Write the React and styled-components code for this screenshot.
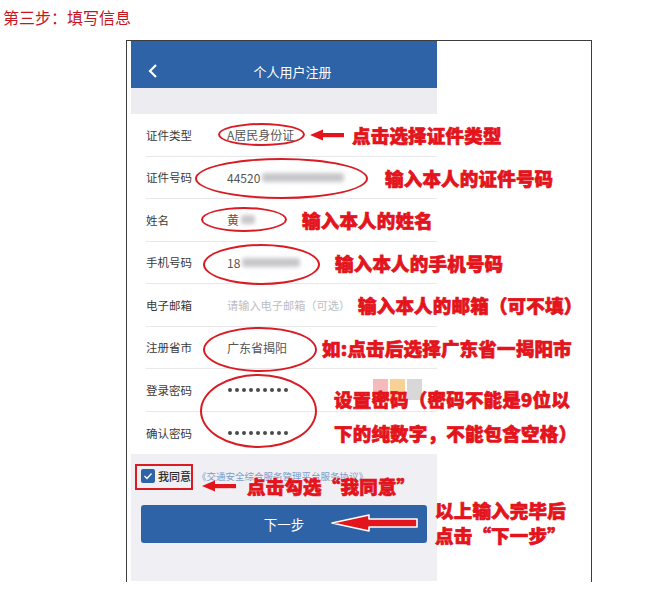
import React from 'react'
import styled, { createGlobalStyle } from 'styled-components'

const Global = createGlobalStyle`
  body {
    margin: 0;
    background: #fff;
    font-family: "Noto Sans CJK SC", "Noto Sans", sans-serif;
  }
`

const Page = styled.div`
  width: 664px;
  height: 591px;
  overflow: hidden;
`

const Title = styled.div`
  height: 28px;
  padding: 6px 0 0 3px;
  box-sizing: border-box;
  line-height: 22px;
  font-size: 16px;
  color: #c8161e;
`

const Frame = styled.div`
  position: relative;
  width: 466px;
  height: 542px;
  margin: 12px 0 0 126px;
  padding-left: 4px;
  box-sizing: border-box;
  border: 1px solid #3c3c3c;
  border-bottom: none;
`

const Phone = styled.div`
  width: 306px;
  display: flex;
  flex-direction: column;
`

const Header = styled.div`
  height: 47px;
  padding: 23px 0 0 17px;
  box-sizing: border-box;
  background: #2e63a7;
  display: grid;
  grid-template-columns: 1fr auto 1fr;
  align-items: start;
  color: #fff;
  font-size: 13px;
  line-height: 16px;
`

const Band = styled.div`
  height: 26px;
  background: #ededf1;
`

const Row = styled.div`
  position: relative;
  height: 42.5px;
  padding-left: 15px;
  background: #fff;
`

const RowInner = styled.div`
  height: 100%;
  display: flex;
  align-items: center;
  box-sizing: border-box;
  border-bottom: ${p => (p.$last ? 'none' : '1px solid #e8e8ea')};
`

const Label = styled.div`
  width: 81px;
  font-size: 11.5px;
  color: #3a3a3a;
`

const Value = styled.div`
  display: flex;
  align-items: center;
  font-size: ${p => (p.$placeholder ? '11.2px' : '12px')};
  color: ${p => (p.$placeholder ? '#bdbdc2' : '#555')};
`

const Blur = styled.span`
  display: inline-block;
  width: ${p => p.$w}px;
  height: 9px;
  margin-left: 2px;
  background: #b8b8bc;
  border-radius: 3px;
  filter: blur(2px);
  opacity: 0.8;
`

const Dots = styled.div`
  display: flex;
  gap: 2.6px;
  padding-left: 1px;
`

const Dot = styled.span`
  width: 4.4px;
  height: 4.4px;
  border-radius: 50%;
  background: #4a4a4a;
`

const Ellipse = styled.div`
  position: absolute;
  z-index: 2;
  left: ${p => p.$x}px;
  top: ${p => p.$y}px;
  width: ${p => p.$w}px;
  height: ${p => p.$h}px;
  border: 2.2px solid #d91c24;
  border-radius: 50%;
  box-sizing: border-box;
  pointer-events: none;
`

const Note = styled.div`
  position: absolute;
  z-index: 3;
  left: ${p => p.$x}px;
  top: 50%;
  transform: translateY(calc(-50% + ${p => p.$dy || 0}px));
  white-space: nowrap;
  font-size: 18.5px;
  font-weight: 900;
  line-height: ${p => p.$lh || 24}px;
  color: #e3141c;
  letter-spacing: 0.2px;
  -webkit-text-stroke: 0.7px #e3141c;
`

const ArrowWrap = styled.div`
  position: absolute;
  z-index: 3;
  left: ${p => p.$x}px;
  top: ${p => (p.$y === undefined ? '50%' : p.$y + 'px')};
  transform: ${p => (p.$y === undefined ? `translateY(calc(-50% + ${p.$dy || 0}px))` : 'none')};
  line-height: 0;
`

const Stamps = styled.div`
  position: absolute;
  z-index: 2;
  left: 242px;
  top: 10px;
  display: flex;
  gap: 2px;
  opacity: 0.75;
`

const Stamp = styled.span`
  width: 15px;
  height: 21px;
  background: ${p => p.$c};
`

const Bottom = styled.div`
  height: 127px;
  padding: 15px 10px 0;
  box-sizing: border-box;
  background: #efeff4;
`

const AgreeRow = styled.div`
  position: relative;
  height: 14px;
  display: flex;
  align-items: center;
  font-size: 11px;
`

const Check = styled.span`
  width: 14px;
  height: 14px;
  border-radius: 2px;
  background: #2e63a7;
  display: flex;
  align-items: center;
  justify-content: center;
`

const Agree = styled.span`
  margin-left: 3px;
  color: #2c2c2c;
  font-weight: 500;
`

const Protocol = styled.span`
  margin-left: 6px;
  font-size: 9.5px;
  color: #7c9bc8;
  white-space: nowrap;
`

const RedBox = styled.div`
  position: absolute;
  left: -6px;
  top: -5px;
  width: 58px;
  height: 26px;
  border: 2px solid #d91c24;
  box-sizing: border-box;
`

const NextButton = styled.div`
  position: relative;
  height: 38px;
  margin-top: 22px;
  border-radius: 3px;
  background: #2e63a7;
  color: #fff;
  font-size: 13.5px;
  display: flex;
  align-items: center;
  justify-content: center;
`

const SmallArrow = () => (
  <svg width="34" height="12" viewBox="0 0 34 12">
    <polygon points="0,6 13,0.5 13,11.5" fill="#e3141c" />
    <rect x="12" y="4" width="22" height="4.2" fill="#e3141c" />
  </svg>
)

const BigArrow = () => (
  <svg width="88" height="18" viewBox="0 0 88 18">
    <path
      d="M1,9 L38,1 L38,5 L86,5 L86,13 L38,13 L38,17 Z"
      fill="#e3141c"
      stroke="#fff"
      strokeWidth="1.6"
      strokeLinejoin="round"
    />
  </svg>
)

const Back = () => (
  <svg width="10" height="14" viewBox="0 0 10 14">
    <polyline points="8,1 2,7 8,13" fill="none" stroke="#fff" strokeWidth="2.2" />
  </svg>
)

const Tick = () => (
  <svg width="10" height="10" viewBox="0 0 10 10">
    <polyline points="1.5,5 4,7.5 8.5,2.5" fill="none" stroke="#fff" strokeWidth="1.4" />
  </svg>
)

const Password = () => (
  <Dots>
    {Array.from({ length: 9 }).map((_, i) => (
      <Dot key={i} />
    ))}
  </Dots>
)

export default function App() {
  return (
    <Page>
      <Global />
      <Title>第三步：填写信息</Title>
      <Frame>
        <Phone>
          <Header>
            <Back />
            <span>个人用户注册</span>
            <span />
          </Header>
          <Band />

          <Row>
            <RowInner>
              <Label>证件类型</Label>
              <Value>A居民身份证</Value>
            </RowInner>
            <Ellipse $x={87} $y={9} $w={87} $h={23} />
            <ArrowWrap $x={179}>
              <SmallArrow />
            </ArrowWrap>
            <Note $x={221}>点击选择证件类型</Note>
          </Row>

          <Row>
            <RowInner>
              <Label>证件号码</Label>
              <Value>
                44520<Blur $w={82} />
              </Value>
            </RowInner>
            <Ellipse $x={64} $y={1} $w={173} $h={41} />
            <Note $x={254}>输入本人的证件号码</Note>
          </Row>

          <Row>
            <RowInner>
              <Label>姓名</Label>
              <Value>
                黄<Blur $w={14} />
              </Value>
            </RowInner>
            <Ellipse $x={70} $y={8} $w={86} $h={25} />
            <Note $x={171}>输入本人的姓名</Note>
          </Row>

          <Row>
            <RowInner>
              <Label>手机号码</Label>
              <Value>
                18<Blur $w={58} />
              </Value>
            </RowInner>
            <Ellipse $x={72} $y={2} $w={117} $h={41} />
            <Note $x={204}>输入本人的手机号码</Note>
          </Row>

          <Row>
            <RowInner>
              <Label>电子邮箱</Label>
              <Value $placeholder>请输入电子邮箱（可选）</Value>
            </RowInner>
            <Note $x={227}>输入本人的邮箱（可不填）</Note>
          </Row>

          <Row>
            <RowInner>
              <Label>注册省市</Label>
              <Value>广东省揭阳</Value>
            </RowInner>
            <Ellipse $x={72} $y={0} $w={114} $h={45} />
            <Note $x={191}>如:点击后选择广东省一揭阳市</Note>
          </Row>

          <Row>
            <RowInner>
              <Label>登录密码</Label>
              <Password />
            </RowInner>
            <Ellipse $x={69} $y={5} $w={117} $h={74} />
            <Stamps>
              <Stamp $c="#f2a3a3" />
              <Stamp $c="#f6c273" />
              <Stamp $c="#cbcbcb" />
            </Stamps>
            <Note $x={203} $dy={26} $lh={34}>
              设置密码（密码不能是9位以
              <br />
              下的纯数字，不能包含空格）
            </Note>
          </Row>

          <Row>
            <RowInner $last>
              <Label>确认密码</Label>
              <Password />
            </RowInner>
          </Row>

          <Bottom>
            <AgreeRow>
              <Check>
                <Tick />
              </Check>
              <Agree>我同意</Agree>
              <Protocol>《交通安全综合服务管理平台服务协议》</Protocol>
              <RedBox />
              <ArrowWrap $x={61} $dy={10}>
                <SmallArrow />
              </ArrowWrap>
              <Note $x={106} $dy={10}>点击勾选“我同意”</Note>
            </AgreeRow>

            <NextButton>
              下一步
              <ArrowWrap $x={190} $y={9}>
                <BigArrow />
              </ArrowWrap>
              <Note $x={294} $dy={-1} $lh={25}>
                以上输入完毕后
                <br />
                点击“下一步”
              </Note>
            </NextButton>
          </Bottom>
        </Phone>
      </Frame>
    </Page>
  )
}
